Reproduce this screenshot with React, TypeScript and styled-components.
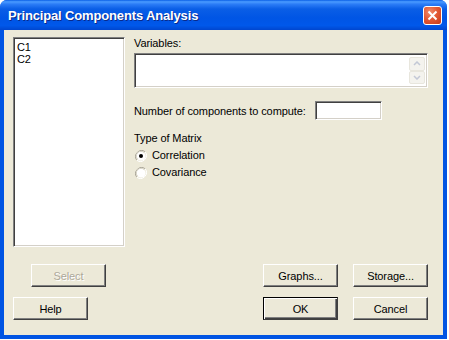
import React from "react";
import styled, { createGlobalStyle } from "styled-components";

const GlobalStyle = createGlobalStyle`
  html, body {
    margin: 0;
    padding: 0;
    background: #ffffff;
  }
  body {
    width: 449px;
    height: 340px;
    overflow: hidden;
    font-family: "Liberation Sans", Arial, sans-serif;
    font-size: 11px;
    letter-spacing: -0.1px;
    color: #000;
  }
`;

const Window = styled.div`
  width: 447px;
  height: 339px;
  display: flex;
  flex-direction: column;
  border-radius: 7px 7px 0 0;
  overflow: hidden;
  background: #0054e3;
`;

const TitleBar = styled.div`
  height: 30px;
  flex: none;
  display: flex;
  align-items: center;
  justify-content: space-between;
  padding: 0 5px 0 8px;
  background: linear-gradient(
    to bottom,
    #0a5fe6 0%,
    #4a9bff 6%,
    #2b7cf6 14%,
    #0a5ee6 30%,
    #0055e5 60%,
    #0058ea 85%,
    #0046cf 100%
  );
`;

const Title = styled.span`
  color: #fff;
  font-weight: bold;
  font-size: 13px;
  letter-spacing: -0.15px;
  text-shadow: 1px 1px 0 #0a2a8a;
  padding-top: 1px;
`;

const CloseButton = styled.div`
  width: 19px;
  height: 19px;
  box-sizing: border-box;
  border: 1px solid #fff;
  border-radius: 3px;
  background: radial-gradient(circle at 35% 30%, #f08c6c 0%, #e35a35 45%, #c4391a 100%);
  display: grid;
  place-items: center;
  margin-top: 1px;
`;

const Body = styled.div`
  flex: 1;
  margin: 0 4px 4px 4px;
  background: #ece9d8;
  padding: 7px 15px 0 9px;
  display: flex;
  flex-direction: column;
`;

const TopArea = styled.div`
  display: flex;
  gap: 9px;
`;

const Sunken = styled.div`
  box-sizing: border-box;
  background: #fff;
  border-top: 1px solid #808080;
  border-left: 1px solid #808080;
  border-right: 1px solid #fff;
  border-bottom: 1px solid #fff;
  box-shadow: inset 1px 1px 0 #404040, inset -1px -1px 0 #d4d0c8;
`;

const ListBox = styled(Sunken)`
  width: 112px;
  height: 210px;
  padding: 3px 3px;
  line-height: 12px;
`;

const RightPanel = styled.div`
  flex: 1;
  display: flex;
  flex-direction: column;
`;

const Label = styled.div<{ $top?: number }>`
  margin-top: ${(p) => p.$top ?? 0}px;
  line-height: 13px;
`;

const VarBox = styled(Sunken)`
  margin-top: 3px;
  height: 35px;
  display: flex;
  justify-content: flex-end;
  padding: 3px 2px 3px 0;
`;

const ScrollCol = styled.div`
  width: 16px;
  display: flex;
  flex-direction: column;
  justify-content: space-between;
`;

const ScrollBtn = styled.div`
  height: 14px;
  display: grid;
  place-items: center;
  background: #f4f3ee;
  border: 1px solid #e8e6dd;
  border-radius: 2px;
`;

const NumberRow = styled.div`
  display: flex;
  align-items: center;
  gap: 9px;
  margin-top: 13px;
`;

const NumberInput = styled(Sunken)`
  width: 67px;
  height: 19px;
`;

const RadioRow = styled.div<{ $top: number }>`
  display: flex;
  align-items: center;
  gap: 5px;
  margin-top: ${(p) => p.$top}px;
  padding-left: 1px;
  line-height: 13px;
`;

const ButtonRow = styled.div<{ $top: number }>`
  display: flex;
  justify-content: space-between;
  margin-top: ${(p) => p.$top}px;
`;

const ButtonGroup = styled.div<{ $indent?: number }>`
  display: flex;
  gap: 15px;
  padding-left: ${(p) => p.$indent ?? 0}px;
`;

const Button = styled.div<{ $disabled?: boolean; $default?: boolean }>`
  width: 75px;
  height: 23px;
  box-sizing: border-box;
  display: grid;
  place-items: center;
  background: #ece9d8;
  color: ${(p) => (p.$disabled ? "#aca899" : "#000")};
  text-shadow: ${(p) => (p.$disabled ? "1px 1px 0 #fff" : "none")};
  border-top: 1px solid ${(p) => (p.$default ? "#000" : "#fff")};
  border-left: 1px solid ${(p) => (p.$default ? "#000" : "#fff")};
  border-right: 1px solid #404040;
  border-bottom: 1px solid #404040;
  box-shadow: ${(p) =>
    p.$default
      ? "inset 1px 1px 0 #fff, inset -1px -1px 0 #404040, inset -2px -2px 0 #808080"
      : "inset -1px -1px 0 #808080"};
`;

const Radio = ({ checked }: { checked?: boolean }) => (
  <svg width="12" height="12" viewBox="0 0 12 12">
    <path d="M10.2 1.8 A6 6 0 0 0 1.8 10.2" fill="none" stroke="#a8a497" strokeWidth="1" />
    <path d="M1.8 10.2 A6 6 0 0 0 10.2 1.8" fill="none" stroke="#ffffff" strokeWidth="1" />
    <circle cx="6" cy="6" r="4.6" fill="#fff" />
    <path d="M9.3 2.7 A4.6 4.6 0 0 0 2.7 9.3" fill="none" stroke="#d8d5c8" strokeWidth="1" />
    {checked && <circle cx="6" cy="6" r="2" fill="#000" />}
  </svg>
);

const Chevron = ({ up }: { up?: boolean }) => (
  <svg width="8" height="5" viewBox="0 0 8 5">
    <path
      d={up ? "M1 4 L4 1 L7 4" : "M1 1 L4 4 L7 1"}
      fill="none"
      stroke="#c3c8d6"
      strokeWidth="1.5"
    />
  </svg>
);

export default function App() {
  return (
    <>
      <GlobalStyle />
      <Window>
        <TitleBar>
          <Title>Principal Components Analysis</Title>
          <CloseButton>
            <svg width="11" height="11" viewBox="0 0 11 11">
              <path d="M1.5 1.5 L9.5 9.5 M9.5 1.5 L1.5 9.5" stroke="#fff" strokeWidth="2" />
            </svg>
          </CloseButton>
        </TitleBar>
        <Body>
          <TopArea>
            <ListBox>
              <div>C1</div>
              <div>C2</div>
            </ListBox>
            <RightPanel>
              <Label $top={0}>Variables:</Label>
              <VarBox>
                <ScrollCol>
                  <ScrollBtn>
                    <Chevron up />
                  </ScrollBtn>
                  <ScrollBtn>
                    <Chevron />
                  </ScrollBtn>
                </ScrollCol>
              </VarBox>
              <NumberRow>
                <span>Number of components to compute:</span>
                <NumberInput />
              </NumberRow>
              <Label $top={12}>Type of Matrix</Label>
              <RadioRow $top={4}>
                <Radio checked />
                <span>Correlation</span>
              </RadioRow>
              <RadioRow $top={4}>
                <Radio />
                <span>Covariance</span>
              </RadioRow>
            </RightPanel>
          </TopArea>
          <ButtonRow $top={17}>
            <ButtonGroup $indent={18}>
              <Button $disabled>Select</Button>
            </ButtonGroup>
            <ButtonGroup>
              <Button>Graphs...</Button>
              <Button>Storage...</Button>
            </ButtonGroup>
          </ButtonRow>
          <ButtonRow $top={10}>
            <ButtonGroup>
              <Button>Help</Button>
            </ButtonGroup>
            <ButtonGroup>
              <Button $default>OK</Button>
              <Button>Cancel</Button>
            </ButtonGroup>
          </ButtonRow>
        </Body>
      </Window>
    </>
  );
}
